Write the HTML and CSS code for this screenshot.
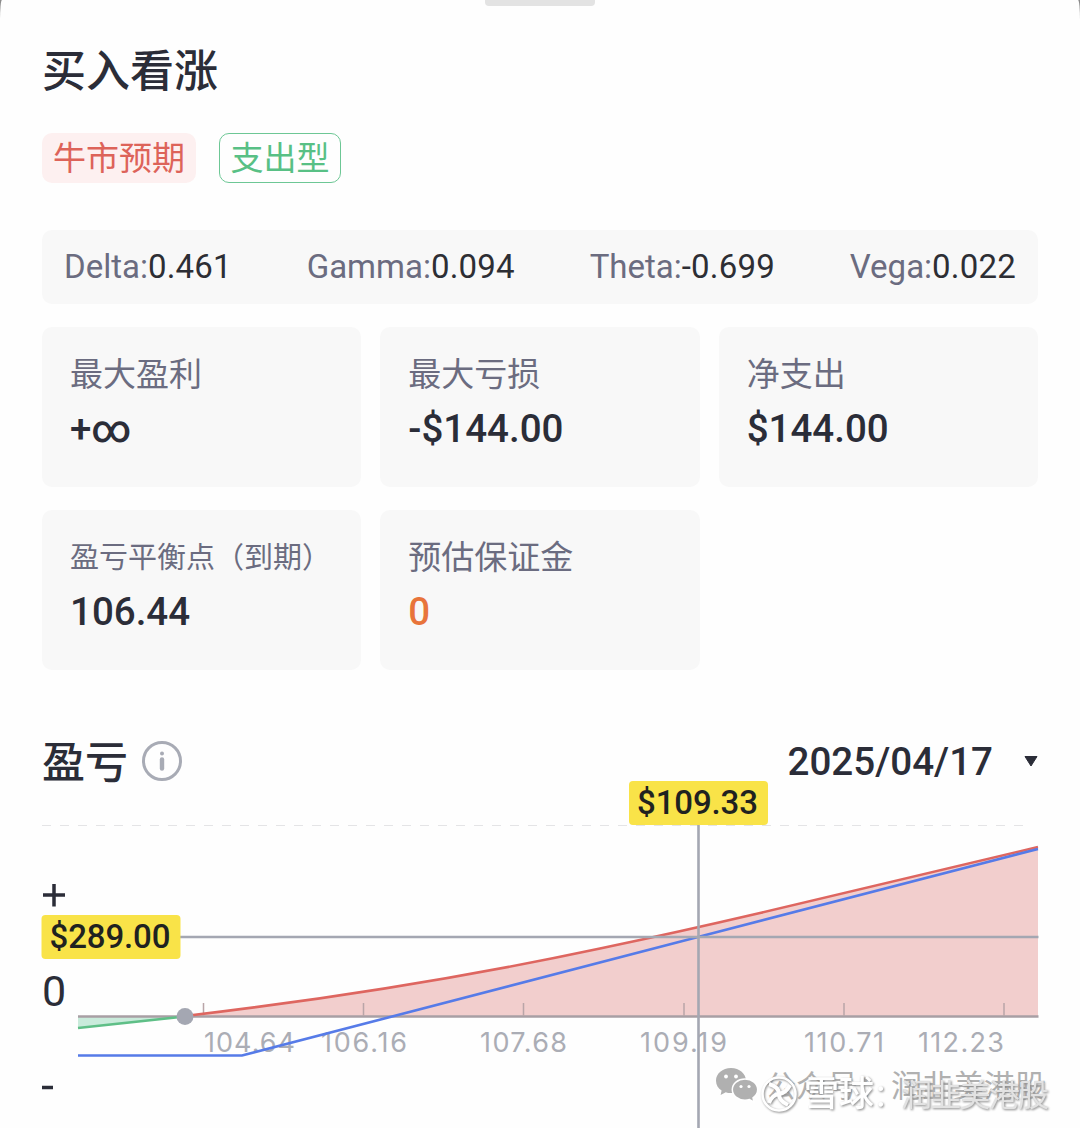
FILE: index.html
```
<!DOCTYPE html>
<html lang="zh-CN">
<head>
    <meta charset="UTF-8">
    <meta name="viewport" content="width=device-width, initial-scale=1.0">
    <title>买入看涨</title>
    <link rel="stylesheet" href="styles.css">
</head>
<body>
    <main class="sheet">
        <div class="handle"></div>
        <h1>买入看涨</h1>
        <div class="tags">
            <span class="tag tag-red">牛市预期</span>
            <span class="tag tag-green">支出型</span>
        </div>

        <div class="greeks">
            <div>Delta:<b>0.461</b></div>
            <div>Gamma:<b>0.094</b></div>
            <div>Theta:<b>-0.699</b></div>
            <div>Vega:<b>0.022</b></div>
        </div>

        <div class="cards">
            <div class="card">
                <p class="label">最大盈利</p>
                <p class="value">+∞</p>
            </div>
            <div class="card">
                <p class="label">最大亏损</p>
                <p class="value">-$144.00</p>
            </div>
            <div class="card">
                <p class="label">净支出</p>
                <p class="value">$144.00</p>
            </div>
            <div class="card">
                <p class="label small">盈亏平衡点（到期）</p>
                <p class="value">106.44</p>
            </div>
            <div class="card">
                <p class="label">预估保证金</p>
                <p class="value orange">0</p>
            </div>
        </div>

        <div class="chart-header">
            <h2>盈亏</h2>
            <svg class="info" viewBox="0 0 40 40">
                <circle cx="20" cy="20" r="18.5" fill="none" stroke="#a8abb5" stroke-width="3"/>
                <circle cx="20" cy="12.6" r="2" fill="#a8abb5"/>
                <path d="M20 18.5V27.5" stroke="#a8abb5" stroke-width="4.4" stroke-linecap="round"/>
            </svg>
            <span class="date">2025/04/17</span>
            <svg class="caret" viewBox="0 0 14 11">
                <path d="M1 .5H13L7 10Z" fill="#2b2d38" stroke="#2b2d38" stroke-linejoin="round"/>
            </svg>
        </div>

        <svg class="chart" viewBox="0 780 1080 348">
            <path class="grid" d="M42 825.5H1030"/>

            <!-- profit and loss areas -->
            <path fill="#c9ebdb" d="M78 1016L185 1016L78 1028Z"/>
            <path fill="#f2cecd" d="M185 1016C330 999 480 974 600 948.5C650 938 700 927 760 913L1038 847V1016Z"/>
            <path class="zero" d="M78 1016.5H1038.5"/>
            <path class="tick" d="M203.5 1003V1016M363.5 1003V1016M523.5 1003V1016M684 1003V1016M844 1003V1016M1004 1003V1016"/>

            <g class="axis">
                <text x="204" y="1051.5" textLength="91">104.64</text>
                <text x="321" y="1051.5" textLength="86">106.16</text>
                <text x="480" y="1051.5" textLength="87">107.68</text>
                <text x="640" y="1051.5" textLength="87">109.19</text>
                <text x="804" y="1051.5" textLength="80">110.71</text>
                <text x="918" y="1051.5" textLength="86">112.23</text>
            </g>

            <path class="line green" d="M78 1028L185 1016.5"/>
            <path class="line red" d="M185 1016C330 999 480 974 600 948.5C650 938 700 927 760 913L1038 847"/>
            <path class="line blue" d="M78 1055.5H242L698 937L1038 849"/>
            <circle cx="185" cy="1016.5" r="8.5" fill="#a4a7b2"/>

            <!-- crosshair -->
            <path class="cross" d="M180 937H1038.5M698.5 825V1128"/>
            <rect class="badge" x="629" y="781" width="139" height="44" rx="4"/>
            <text class="badge-text" x="637" y="814" textLength="121">$109.33</text>
            <rect class="badge" x="41.5" y="915" width="139" height="44" rx="4"/>
            <text class="badge-text" x="49.5" y="948" textLength="121">$289.00</text>

            <path class="sign" d="M43 895H65M54 884V906.5"/>
            <text class="zero-label" x="42" y="1006">0</text>
            <path class="sign" d="M42 1087.5H53"/>

            <!-- watermarks -->
            <g fill="#b0b0b0">
                <path d="M731 1068c-8.500 0-15 5.600-15 12.700 0 4.200 2.200 7.600 5.600 9.900l-1 4.400 5.200-2.700c2 .6 3.500.8 5.200.8 8.500 0 15-5.500 15-12.400S739.500 1068 731 1068Z"/>
                <path stroke="#fff" stroke-width="1.5" d="M745 1079c-7.200 0-12.700 4.700-12.700 10.600s5.500 10.600 12.700 10.600c1.600 0 3.100-.2 4.500-.7l4.500 2.600-1-4.300c3-2 4.700-4.900 4.700-8.200 0-5.900-5.500-10.600-12.700-10.600Z"/>
                <g fill="#fff">
                    <circle cx="726" cy="1076.5" r="1.900"/>
                    <circle cx="736" cy="1076.5" r="1.900"/>
                    <circle cx="741" cy="1086.5" r="1.600"/>
                    <circle cx="749" cy="1086.5" r="1.600"/>
                </g>
                <text class="mark" x="765" y="1097">公众号</text>
                <text class="mark" x="858" y="1097">：</text>
                <text class="mark" x="891" y="1097">润韭美港股</text>
            </g>
            <g class="mark-top">
                <circle cx="779" cy="1094" r="16.5" fill="none" stroke="#fff" stroke-width="2.5"/>
                <path d="M769 1084q10 3 10 10t9 11M790 1085q-4 8-11 9t-10 9" fill="none" stroke="#fff" stroke-width="4"/>
                <text class="mark-bold" x="804" y="1106">雪球</text>
                <text class="mark" x="873" y="1106">：</text>
                <text class="mark mark-name" x="901" y="1106" textLength="148">润韭美港股</text>
            </g>
        </svg>
    </main>
</body>
</html>
```
FILE: styles.css
```
* {
    box-sizing: border-box;
}

body {
    margin: 0;
    background-color: #8c8c8c;
    color: #2b2d38;
    font-family: Roboto, "Noto Sans CJK SC", sans-serif;
}

.sheet {
    height: 1128px;
    padding: 0 42px;
    overflow: hidden;
    background-color: #fefefe;
    border-radius: 2px 2px 0 0 / 20px 20px 0 0;
}

.handle {
    width: 110px;
    height: 6px;
    margin: 0 auto;
    background-color: #e3e3e3;
    border-radius: 0 0 4px 4px;
}

h1 {
    margin: 36px 0 31px;
    font-size: 44px;
    line-height: 60px;
    font-weight: 500;
}

.tags {
    display: flex;
    gap: 23px;
}

.tag {
    height: 50px;
    padding: 0 11px;
    border-radius: 10px;
    font-size: 33px;
    line-height: 51px;
    white-space: nowrap;
}

.tag-red {
    color: #dd6359;
    background-color: #fdf0f0;
}

.tag-green {
    padding: 0 10.5px;
    color: #58c085;
    border: 1px solid #6dc795;
    line-height: 49px;
}

.greeks {
    display: flex;
    justify-content: space-between;
    height: 74px;
    margin-top: 47px;
    padding: 0 22px;
    background-color: #f8f8f8;
    border-radius: 10px;
    color: #6b6c80;
    font-size: 33px;
    line-height: 73px;
}

.greeks b {
    color: #2d2e34;
    font-weight: 400;
    letter-spacing: 0.2px;
}

.cards {
    display: grid;
    grid-template-columns: repeat(3, 1fr);
    grid-auto-rows: 160px;
    gap: 23px 19px;
    margin-top: 23px;
}

.card {
    padding: 23px 28px;
    background-color: #f8f8f8;
    border-radius: 10px;
}

.card p {
    margin: 0;
}

.card .label {
    height: 50px;
    color: #6b6c80;
    font-size: 33px;
    line-height: 50px;
    white-space: nowrap;
}

.card .small {
    font-size: 29px;
}

.card .value {
    margin-top: 3px;
    font-size: 38.5px;
    line-height: 52px;
    font-weight: 500;
}

.card .orange {
    color: #e8743b;
}

.chart-header {
    display: flex;
    align-items: center;
    height: 40px;
    margin-top: 71px;
}

h2 {
    margin: 0;
    padding-top: 4px;
    font-size: 43px;
    line-height: 40px;
    font-weight: 500;
}

.info {
    width: 40px;
    margin-left: 14px;
}

.date {
    margin-left: auto;
    padding-top: 1px;
    font-size: 38.6px;
    font-weight: 500;
}

.caret {
    width: 14px;
    margin-left: 31px;
}

.chart {
    display: block;
    width: 1080px;
    height: 348px;
    margin: -1px -42px 0;
}

.grid {
    stroke: #e4e4e6;
    stroke-dasharray: 9 9;
}

.zero {
    stroke: #a89fa4;
    stroke-width: 2.5;
}

.tick {
    stroke: #b9a5a8;
    stroke-width: 1.5;
}

.line {
    fill: none;
    stroke-width: 2.6;
}

.green {
    stroke: #5fbf87;
}

.red {
    stroke: #de6660;
}

.blue {
    stroke: #567be8;
}

.axis text {
    fill: #abadb5;
    font-family: Inter, sans-serif;
    font-size: 27px;
}

.cross {
    stroke: #a4a7b2;
    stroke-width: 2.6;
}

.badge {
    fill: #f9e348;
}

.badge-text {
    fill: #1f2220;
    font-size: 33px;
    font-weight: 500;
}

.sign {
    stroke: #2b2d38;
    stroke-width: 3.5;
}

.zero-label {
    fill: #2b2d38;
    font-size: 43px;
}

.mark {
    font-size: 31px;
}

.mark-bold {
    font-size: 35px;
    font-weight: 500;
}

.mark-top {
    fill: #fff;
    filter: drop-shadow(1px 1px 1px #888);
}

.mark-name {
    fill: #e2e2e2;
}
```
